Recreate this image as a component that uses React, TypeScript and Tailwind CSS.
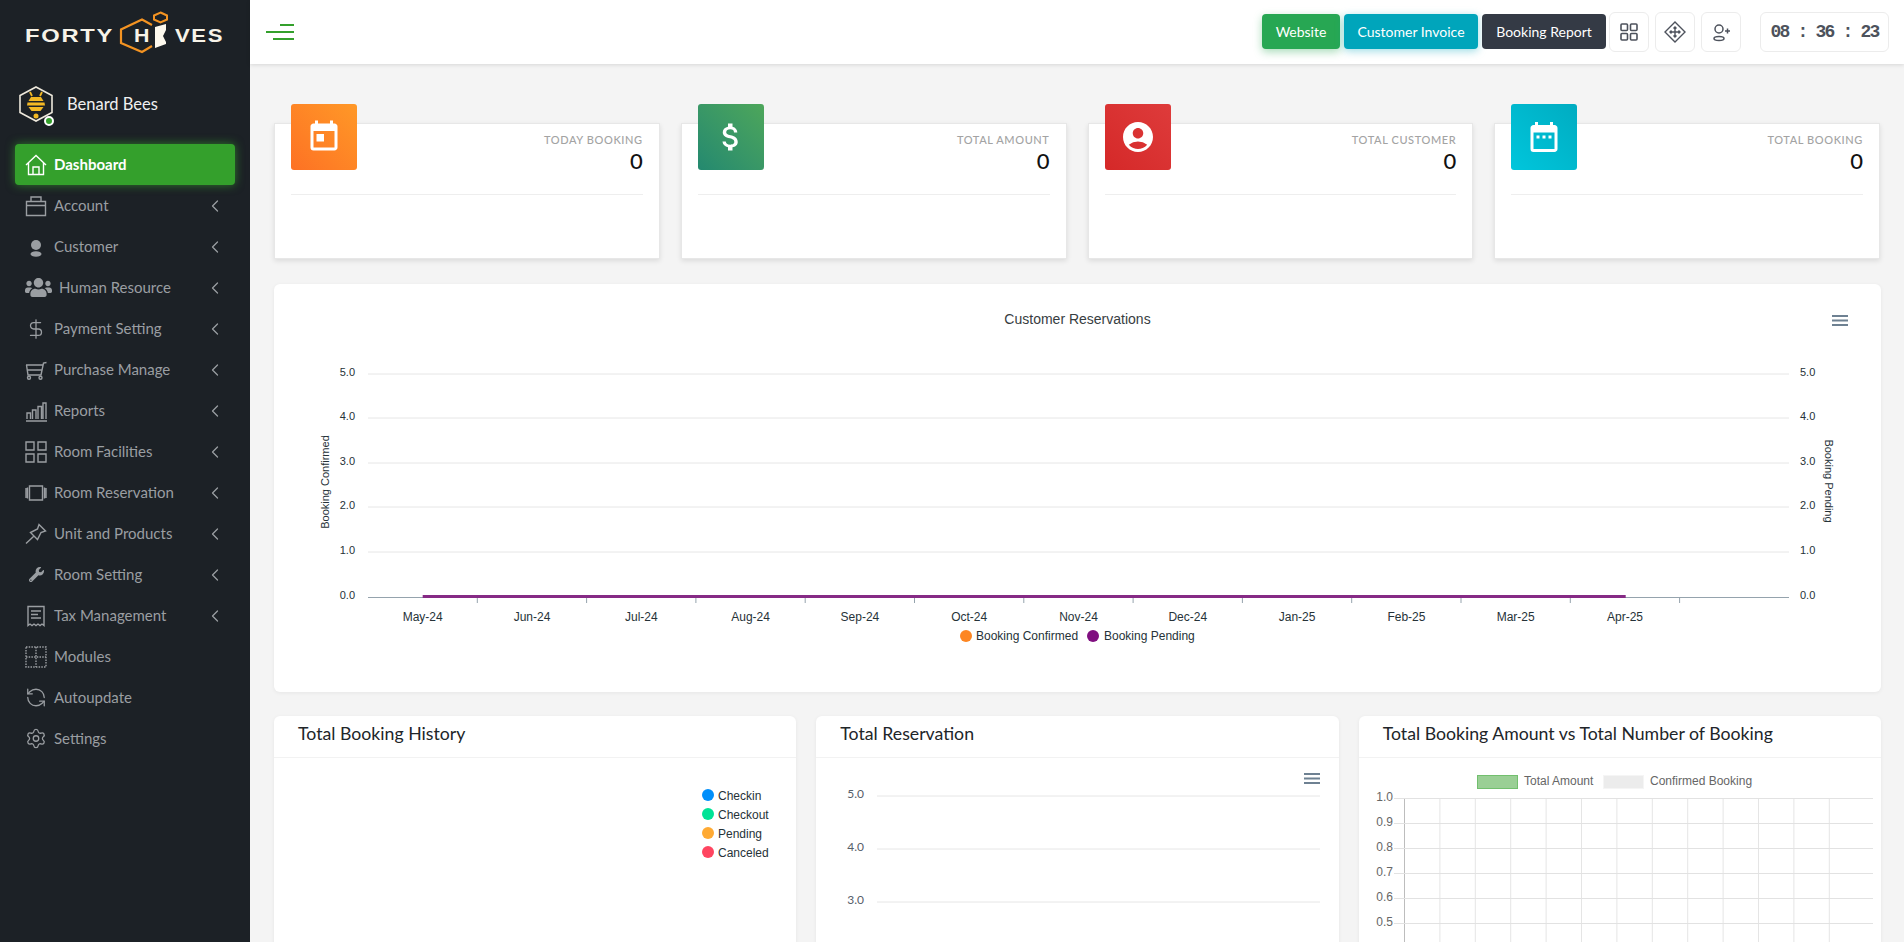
import { ChevronLeft, DollarSign, RefreshCcw, Settings } from "lucide-react";
import { FaUsers, FaWrench } from "react-icons/fa";
import { MdAccountCircle, MdAttachMoney, MdDateRange, MdToday } from "react-icons/md";
import type { ReactNode } from "react";

const UI_FONT = "font-['Lato','Noto_Sans',sans-serif]";
const CHART_FONT = "Liberation Sans, Arial, sans-serif";

function Line({ children }: { children: ReactNode }) {
  return (
    <svg width="22" height="22" viewBox="0 0 22 22" fill="none" stroke="currentColor" strokeWidth="1.4">
      {children}
    </svg>
  );
}

const menu: { label: string; icon: ReactNode; arrow?: boolean; active?: boolean; wide?: boolean }[] = [
  {
    label: "Dashboard",
    active: true,
    icon: (
      <Line>
        <path d="M1 11 11 1.5 21 11M3.5 9v11.5h15V9M8 20.5V13h6v7.5" />
      </Line>
    ),
  },
  {
    label: "Account",
    arrow: true,
    icon: (
      <Line>
        <path d="M1.5 6.5h19v14h-19zM1.5 10.5h19M6 6.5V2h10v4.5" />
      </Line>
    ),
  },
  {
    label: "Customer",
    arrow: true,
    icon: (
      <svg width="22" height="22" viewBox="0 0 22 22" fill="currentColor">
        <circle cx="11" cy="9" r="5" />
        <ellipse cx="11" cy="18" rx="5.5" ry="2.8" />
      </svg>
    ),
  },
  { label: "Human Resource", arrow: true, wide: true, icon: <FaUsers size={27} /> },
  { label: "Payment Setting", arrow: true, icon: <DollarSign size={24} strokeWidth={1.4} /> },
  {
    label: "Purchase Manage",
    arrow: true,
    icon: (
      <Line>
        <path d="M1 6h17M21.5 3.5l-3 .5L16 16H3L1.5 6M2.5 11h14.5" />
        <circle cx="4" cy="18.7" r="1.5" />
        <circle cx="15.5" cy="18.7" r="1.5" />
      </Line>
    ),
  },
  {
    label: "Reports",
    arrow: true,
    icon: (
      <Line>
        <path d="M1 21h21M2 19v-6h3.5v6M7.5 19v-9H11v9M13 19V6.5h3.5V19M18 19V3h3v16" />
      </Line>
    ),
  },
  {
    label: "Room Facilities",
    arrow: true,
    icon: (
      <Line>
        <path d="M1 1h8v8H1zM13 1h8v8h-8zM1 13h8v8H1zM13 13h8v8h-8z" />
      </Line>
    ),
  },
  {
    label: "Room Reservation",
    arrow: true,
    icon: (
      <Line>
        <path d="M4.5 4h13v14h-13zM1 6v10M2.5 5.5v11M19.5 5.5v11M21 6v10" />
      </Line>
    ),
  },
  {
    label: "Unit and Products",
    arrow: true,
    icon: (
      <Line>
        <path d="M14 1.5 20.5 8 16 9.5l-3.500 7-7-7 7-3.500zM8.500 13.500 1 20.500" />
      </Line>
    ),
  },
  { label: "Room Setting", arrow: true, icon: <FaWrench size={15} /> },
  {
    label: "Tax Management",
    arrow: true,
    icon: (
      <Line>
        <path d="M3 1.5h16v19l-2-1.500-2 1.500-2-1.500-2 1.500-2-1.500-2 1.500-2-1.500-2 1.500zM6 6h10M6 9.500h7M6 13h10" />
      </Line>
    ),
  },
  {
    label: "Modules",
    icon: (
      <Line>
        <path strokeDasharray="1.5 1.2" d="M1 1h20v20H1zM11 1v20M1 11h20" />
      </Line>
    ),
  },
  { label: "Autoupdate", icon: <RefreshCcw size={23} strokeWidth={1.4} /> },
  { label: "Settings", icon: <Settings size={23} strokeWidth={1.4} /> },
];

const stats = [
  { label: "Today Booking", icon: <MdToday size={36} />, bg: "bg-gradient-to-tr from-[#fd7124] to-[#ff9827]" },
  { label: "Total Amount", icon: <MdAttachMoney size={36} />, bg: "bg-gradient-to-tr from-[#23896f] to-[#4da65a]" },
  { label: "Total Customer", icon: <MdAccountCircle size={36} />, bg: "bg-gradient-to-tr from-[#d52828] to-[#de3b3b]" },
  { label: "Total Booking", icon: <MdDateRange size={36} />, bg: "bg-gradient-to-tr from-[#00c6dc] to-[#00acc1]" },
];

const months = ["May-24", "Jun-24", "Jul-24", "Aug-24", "Sep-24", "Oct-24", "Nov-24", "Dec-24", "Jan-25", "Feb-25", "Mar-25", "Apr-25"];

function Logo() {
  return (
    <svg width="250" height="64" className="block">
      <g fontFamily="Liberation Sans, Arial, sans-serif" fontWeight="700" fontSize="18" fill="#f7f3e8" letterSpacing="1.3">
        <text x="25" y="42" textLength="89" lengthAdjust="spacingAndGlyphs">FORTY</text>
        <text x="134" y="42" textLength="17" lengthAdjust="spacingAndGlyphs">H</text>
        <text x="175" y="42" textLength="49" lengthAdjust="spacingAndGlyphs">VES</text>
      </g>
      <path d="M152 25 142 19.5 121 29.5V43l21 9 10-6" fill="none" stroke="#f39322" strokeWidth="2.2" />
      <path d="M155 27l11-3v6l-3 6 3 6v2l-11 4z" fill="#fdf9ee" />
      <path d="M160.500 12.500l6.500 3v4l-6.500 3-6.500-3v-4z" fill="none" stroke="#f39322" strokeWidth="2" />
    </svg>
  );
}

function BeeAvatar() {
  return (
    <div className="relative w-[34px] h-[36px]">
      <svg width="34" height="36" viewBox="0 0 34 36">
        <path d="M17 1 33 9.500v17L17 35 1 26.500v-17z" fill="none" stroke="#eee9dc" strokeWidth="1.6" />
        <path d="M11 6l2 4M23 6l-2 4" stroke="#f2b824" strokeWidth="1.8" />
        <path d="M12 11h10l2.500 4h-15zM8.500 16.500h17l.5 3H8zM9.500 21h15l-3 4h-9z" fill="#f2b824" />
        <circle cx="17" cy="30" r="2.500" fill="#f2b824" />
      </svg>
      <span className="absolute right-[-1px] bottom-[-4px] w-[10px] h-[10px] rounded-full bg-[#34a02c] border-2 border-white" />
    </div>
  );
}

function Sidebar() {
  return (
    <aside className={`w-[250px] shrink-0 bg-[#1c2126] h-full ${UI_FONT}`}>
      <Logo />
      <div className="flex items-center pl-[19px] h-[80px]">
        <BeeAvatar />
        <span className="ml-[14px] text-[16.5px] text-[#f0f0f0]">Benard Bees</span>
      </div>
      <nav>
        {menu.map((item) => (
          <a
            key={item.label}
            className={
              item.active
                ? "mx-[15px] h-[41px] flex items-center pl-[10px] pr-[10px] rounded text-white font-bold bg-[#34a02c] shadow-[0_0_10px_rgba(52,160,44,0.7)]"
                : "mx-[15px] h-[41px] flex items-center pl-[10px] pr-[10px] text-[#9a9ea2]"
            }
          >
            <span className={item.wide ? "w-[27px] flex justify-center" : "w-[22px] flex justify-center"}>{item.icon}</span>
            <span className="ml-[7px] text-[15px] flex-1">{item.label}</span>
            {item.arrow && <ChevronLeft size={20} strokeWidth={1.5} />}
          </a>
        ))}
      </nav>
    </aside>
  );
}

function Header() {
  const iconBtn = "w-[40px] h-[40px] flex items-center justify-center rounded-md border border-[#ececec] bg-white text-[#4d525c]";
  return (
    <header className={`h-[64px] shrink-0 bg-white shadow-[0_1px_4px_rgba(0,0,0,0.12)] flex items-center pl-[16px] pr-[15px] ${UI_FONT}`}>
      <div className="w-[28px] flex flex-col items-end gap-[5px]">
        <span className="block h-[2px] w-[14px] bg-[#34a02c]" />
        <span className="block h-[2px] w-[28px] bg-[#34a02c]" />
        <span className="block h-[2px] w-[21px] bg-[#34a02c]" />
      </div>
      <div className="ml-auto flex items-center">
        <a className="mb-[2px] w-[78px] h-[35px] flex items-center justify-center rounded-sm text-[14px] text-white bg-[#27a753] shadow-[0_3px_8px_rgba(39,167,83,0.4)]">Website</a>
        <a className="mb-[2px] ml-[4px] w-[134px] h-[35px] flex items-center justify-center rounded-sm text-[14px] text-white bg-[#00a5bb] shadow-[0_2px_8px_rgba(0,165,187,0.4)]">Customer Invoice</a>
        <a className="mb-[2px] ml-[4px] w-[124px] h-[35px] flex items-center justify-center rounded-sm text-[14px] text-white bg-[#343a45]">Booking Report</a>
        <div className={`ml-[3px] ${iconBtn}`}>
          <svg width="18" height="18" viewBox="0 0 18 18" fill="none" stroke="currentColor" strokeWidth="1.6">
            <rect x="1" y="1" width="6.5" height="6.5" rx="1" />
            <rect x="10.5" y="1" width="6.5" height="6.5" rx="1" />
            <rect x="1" y="10.5" width="6.5" height="6.5" rx="1" />
            <rect x="10.5" y="10.5" width="6.5" height="6.5" rx="1" />
          </svg>
        </div>
        <div className={`ml-[6px] ${iconBtn}`}>
          <svg width="22" height="22" viewBox="0 0 22 22" fill="none" stroke="currentColor" strokeWidth="1.4">
            <path d="M11 1 21 11 11 21 1 11z" />
            <path d="M11 6v10M6 11h10M9.500 7.500 11 6l1.500 1.500M9.500 14.500 11 16l1.500-1.500M7.500 9.500 6 11l1.500 1.500M14.500 9.500 16 11l-1.500 1.500" />
          </svg>
        </div>
        <div className={`ml-[6px] ${iconBtn}`}>
          <svg width="20" height="20" viewBox="0 0 20 20" fill="none" stroke="currentColor" strokeWidth="1.5">
            <circle cx="8" cy="7" r="4" />
            <ellipse cx="8" cy="16.5" rx="5" ry="2" />
            <path d="M14 9h5M16.500 6.500v5" />
          </svg>
        </div>
        <div className="ml-[19px] w-[129px] h-[40px] flex items-center justify-center rounded-md border border-[#ececec] bg-white text-[#4d525c] text-[18px] font-bold tracking-[-1.8px] font-['Liberation_Mono',monospace] whitespace-pre">
          08 : 36 : 23
        </div>
      </div>
    </header>
  );
}

function StatCard({ label, icon, bg }: { label: string; icon: ReactNode; bg: string }) {
  return (
    <div className={`relative h-[136px] bg-white border border-[#e7e7e7] shadow-[0_2px_5px_rgba(0,0,0,0.1)] px-[16px] pt-[8px] ${UI_FONT}`}>
      <div className={`absolute left-[16px] top-[-20px] w-[66px] h-[66px] rounded-[3px] flex items-center justify-center text-white ${bg}`}>{icon}</div>
      <div className="h-[63px] border-b border-[#eeeeee] text-right">
        <div className="text-[11px] leading-[16px] font-medium tracking-[0.6px] uppercase text-[#a3a3a3]">{label}</div>
        <div className="text-[22px] leading-[26px] font-medium text-[#111]">0</div>
      </div>
    </div>
  );
}

function MenuGlyph({ x, y }: { x: number; y: number }) {
  return (
    <path d={`M${x} ${y}h16M${x} ${y + 4.5}h16M${x} ${y + 9}h16`} stroke="#6e8192" strokeWidth="2" fill="none" />
  );
}

function ReservationsChart() {
  const step = 109.3;
  const grid = [
    { y: 90, v: "5.0" },
    { y: 134, v: "4.0" },
    { y: 179, v: "3.0" },
    { y: 223, v: "2.0" },
    { y: 268, v: "1.0" },
    { y: 313, v: "0.0" },
  ];
  return (
    <svg width="1607" height="408" className="block" fontFamily={CHART_FONT} fill="#263238">
      <text x="803.5" y="40" fontSize="14" textAnchor="middle" fill="#373d3f">Customer Reservations</text>
      <MenuGlyph x={1558} y={32} />
      {grid.map((g) => (
        <g key={g.v} fontSize="11">
          {g.y < 313 && <line x1="94" x2="1515" y1={g.y} y2={g.y} stroke="#e6e6e6" />}
          <text x="81" y={g.y + 2} textAnchor="end">{g.v}</text>
          <text x="1526" y={g.y + 2}>{g.v}</text>
        </g>
      ))}
      <text fontSize="11" textAnchor="middle" transform="translate(55 198) rotate(-90)">Booking Confirmed</text>
      <text fontSize="11" textAnchor="middle" transform="translate(1551 197) rotate(90)">Booking Pending</text>
      <line x1="94" x2="1515" y1="313.5" y2="313.5" stroke="#95a3ad" strokeWidth="1" />
      {months.map((m, i) => (
        <g key={m}>
          <line x1={94 + step * (i + 1)} x2={94 + step * (i + 1)} y1="313" y2="319" stroke="#95a3ad" />
          <text x={148.7 + step * i} y="337" fontSize="12" textAnchor="middle">{m}</text>
        </g>
      ))}
      <line x1="148.7" x2="1351.7" y1="312.5" y2="312.5" stroke="#862a85" strokeWidth="3" />
      <circle cx="692" cy="352" r="6" fill="#fd8622" />
      <text x="702" y="356" fontSize="12">Booking Confirmed</text>
      <circle cx="819" cy="352" r="6" fill="#800f80" />
      <text x="830" y="356" fontSize="12">Booking Pending</text>
    </svg>
  );
}

function HistoryLegend() {
  const rows = [
    { label: "Checkin", color: "bg-[#008ffb]" },
    { label: "Checkout", color: "bg-[#00e396]" },
    { label: "Pending", color: "bg-[#ffaa33]" },
    { label: "Canceled", color: "bg-[#ff4560]" },
  ];
  return (
    <div className="pl-[428px] pt-[27px] text-[12px] text-[#263238] font-['Liberation_Sans',Arial,sans-serif]">
      {rows.map((r) => (
        <div key={r.label} className="h-[19px] flex items-center">
          <span className={`w-[12px] h-[12px] rounded-full ${r.color}`} />
          <span className="ml-[4px] mt-[2px]">{r.label}</span>
        </div>
      ))}
    </div>
  );
}

function ReservationMini() {
  const grid = [
    { y: 38, v: "5.0" },
    { y: 91, v: "4.0" },
    { y: 144, v: "3.0" },
  ];
  return (
    <svg width="522" height="260" className="block" fontFamily="Lato, sans-serif">
      <MenuGlyph x={488} y={16} />
      {grid.map((g) => (
        <g key={g.v}>
          <line x1="61" x2="504" y1={g.y} y2={g.y} stroke="#e6e6e6" />
          <text x="48" y={g.y + 2} fontSize="12" textAnchor="end" fill="#56606a">{g.v}</text>
        </g>
      ))}
    </svg>
  );
}

function AmountChart() {
  const rows = ["1.0", "0.9", "0.8", "0.7", "0.6", "0.5"];
  return (
    <svg width="522" height="260" className="block" fontFamily={CHART_FONT}>
      <rect x="118.5" y="17.5" width="40" height="13" fill="#9acf95" stroke="#72bf6e" />
      <text x="165" y="27" fontSize="12" fill="#666">Total Amount</text>
      <rect x="244.5" y="17.5" width="40" height="13" fill="#ececec" stroke="#f5f5f5" />
      <text x="291" y="27" fontSize="12" fill="#666">Confirmed Booking</text>
      {Array.from({ length: 12 }, (_, i) => (
        <line key={i} x1={45.5 + 35.4 * (i + 1)} x2={45.5 + 35.4 * (i + 1)} y1="40" y2="260" stroke="#e5e5e5" />
      ))}
      <line x1="45.5" x2="45.5" y1="40" y2="260" stroke="#bdbdbd" />
      {rows.map((v, i) => (
        <g key={v}>
          <line x1="35" x2="514" y1={40.5 + 25 * i} y2={40.5 + 25 * i} stroke="#e2e2e2" />
          <text x="34" y={43 + 25 * i} fontSize="12" textAnchor="end" fill="#666">{v}</text>
        </g>
      ))}
    </svg>
  );
}

function Panel({ title, children }: { title: string; children: ReactNode }) {
  return (
    <div className="h-[400px] bg-white rounded-md shadow-[0_1px_4px_rgba(0,0,0,0.06)] overflow-hidden">
      <div className={`h-[42px] flex items-center px-[24px] pb-[4px] border-b border-[#f2f2f2] text-[17.7px] text-[#212529] ${UI_FONT}`}>{title}</div>
      {children}
    </div>
  );
}

export default function App() {
  return (
    <div className="h-screen w-full flex overflow-hidden bg-[#f4f4f4]">
      <Sidebar />
      <div className="flex-1 min-w-0 flex flex-col">
        <Header />
        <main className="flex-1 min-h-0 pl-[24px] pr-[23px] pt-[59px]">
          <div className="mr-[1px] grid grid-cols-4 gap-[21px]">
            {stats.map((s) => (
              <StatCard key={s.label} {...s} />
            ))}
          </div>
          <div className="mt-[25px] h-[408px] bg-white rounded-md shadow-[0_1px_4px_rgba(0,0,0,0.06)] overflow-hidden">
            <ReservationsChart />
          </div>
          <div className="mt-[24px] grid grid-cols-3 gap-[20px]">
            <Panel title="Total Booking History">
              <HistoryLegend />
            </Panel>
            <Panel title="Total Reservation">
              <ReservationMini />
            </Panel>
            <Panel title="Total Booking Amount vs Total Number of Booking">
              <AmountChart />
            </Panel>
          </div>
        </main>
      </div>
    </div>
  );
}
